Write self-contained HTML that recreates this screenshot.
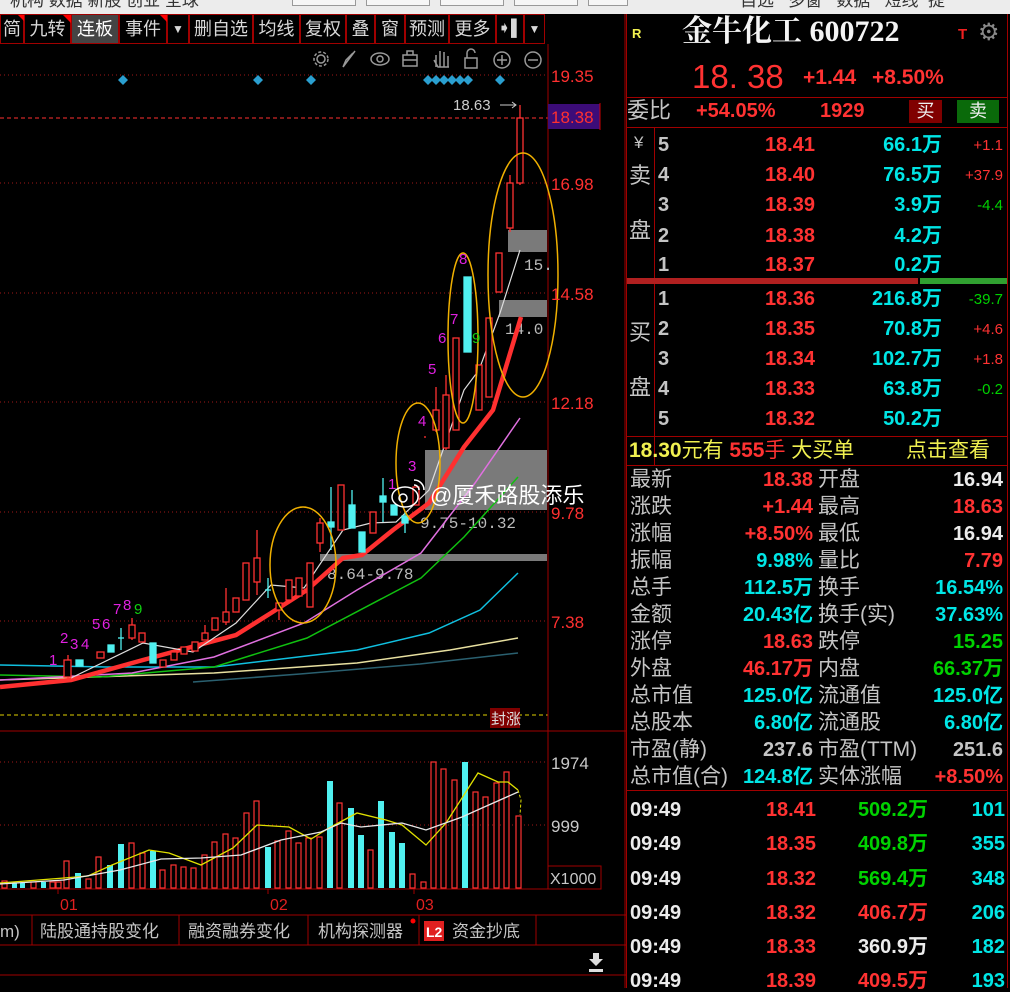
<!DOCTYPE html>
<html><head><meta charset="utf-8">
<style>
*{margin:0;padding:0;box-sizing:border-box}
body{width:1010px;height:988px;background:#000;overflow:hidden;position:relative;font-family:"Liberation Sans","Noto Sans CJK SC",sans-serif}
.t{position:absolute;white-space:nowrap;line-height:1}
.b{font-weight:bold}
.r{color:#ff3232}.c{color:#00e6e6}.g{color:#00d200}.w{color:#ececec}.y{color:#f0f050}.gy{color:#c4c4c4}
.ob{font-size:20px;font-weight:bold}
.sm{font-size:15px}
.st{font-size:21px}
.tb{position:absolute;top:14px;height:30px;border:1px solid #a00000;color:#d8d8d8;font-size:18px;line-height:28px;text-align:center}
</style></head><body>
<div style="position:absolute;left:0;top:0;width:1010px;height:14px;background:#ececec;overflow:hidden">
<div class="t" style="left:10px;top:-8px;font-size:17px;color:#333">机构 数据 新股 创业 全球</div>
<div style="position:absolute;left:292px;top:-8px;width:64px;height:14px;border:1px solid #999;background:#f6f6f6"></div>
<div style="position:absolute;left:366px;top:-8px;width:64px;height:14px;border:1px solid #999;background:#f6f6f6"></div>
<div style="position:absolute;left:440px;top:-8px;width:64px;height:14px;border:1px solid #999;background:#f6f6f6"></div>
<div style="position:absolute;left:514px;top:-8px;width:64px;height:14px;border:1px solid #999;background:#f6f6f6"></div>
<div style="position:absolute;left:588px;top:-8px;width:40px;height:14px;border:1px solid #999;background:#f6f6f6"></div>
<div class="t" style="left:740px;top:-8px;font-size:17px;color:#333">自选 &nbsp; 多窗 &nbsp; 数据 &nbsp; 短线 &nbsp;提</div>
</div>
<div class="tb" style="left:0;width:24px">简</div>
<div class="tb" style="left:24px;width:47px">九转</div>
<div class="tb" style="left:71px;width:48px;background:#444;color:#fff">连板</div>
<div class="tb" style="left:119px;width:48px">事件</div>
<div class="tb" style="left:167px;width:22px;font-size:12px">▼</div>
<div class="tb" style="left:189px;width:64px">删自选</div>
<div class="tb" style="left:253px;width:47px">均线</div>
<div class="tb" style="left:300px;width:46px">复权</div>
<div class="tb" style="left:346px;width:29px">叠</div>
<div class="tb" style="left:375px;width:30px">窗</div>
<div class="tb" style="left:405px;width:44px">预测</div>
<div class="tb" style="left:449px;width:47px">更多</div>
<div class="tb" style="left:496px;width:28px;font-size:16px">➧▌</div>
<div class="tb" style="left:524px;width:21px;font-size:12px">▼</div>
<svg style="position:absolute;left:0;top:0" width="626" height="988">
<polygon points="18,15 24,15 24,21" fill="#f00"/><polygon points="63,15 71,15 71,23" fill="#f00"/><polygon points="160,15 167,15 167,22" fill="#f00"/>
<g stroke="#999" fill="none" stroke-width="1.5">
<circle cx="321" cy="59" r="4"/><circle cx="321" cy="59" r="7" stroke-dasharray="3,2"/>
<path d="M343 67 L355 51 M343 67 L346 60 L353 53"/>
<ellipse cx="380" cy="59" rx="9" ry="6"/><circle cx="380" cy="59" r="3"/>
<rect x="403" y="55" width="14" height="11"/><path d="M407 55 V51 H413 V55 M403 60 H417"/>
<path d="M436 67 V55 M440 67 V51 M444 67 V52 M448 67 V56 M434 60 L438 67 H449"/>
<rect x="465" y="58" width="12" height="10"/><path d="M467 58 V53 A4 4 0 0 1 475 53"/>
<circle cx="502" cy="60" r="8"/><path d="M497 60 H507 M502 55 V65"/>
<circle cx="533" cy="60" r="8"/><path d="M528 60 H538"/>
</g>
<g fill="#2a9fd0">
<path d="M123 75 l5 5 -5 5 -5 -5z"/><path d="M258 75 l5 5 -5 5 -5 -5z"/><path d="M311 75 l5 5 -5 5 -5 -5z"/>
<path d="M428 75 l5 5 -5 5 -5 -5z"/><path d="M436 75 l5 5 -5 5 -5 -5z"/><path d="M444 75 l5 5 -5 5 -5 -5z"/><path d="M452 75 l5 5 -5 5 -5 -5z"/><path d="M460 75 l5 5 -5 5 -5 -5z"/><path d="M468 75 l5 5 -5 5 -5 -5z"/><path d="M500 75 l5 5 -5 5 -5 -5z"/>
</g>
<g stroke="#a01818" stroke-dasharray="1,3" stroke-width="1">
<path d="M0 75H548M0 183H548M0 293H548M0 402H548M0 512H548M0 621H548M0 762H548M0 825H548"/>
</g>
<path d="M0 118H548" stroke="#ff3030" stroke-dasharray="4,3"/>
<path d="M0 715H548" stroke="#e0d000" stroke-dasharray="4,3"/>
<path d="M548 44V889 M0 731H626 M0 889H548 M625 14V988" stroke="#a00000"/>
<g fill="#7a7a7a"><rect x="425" y="450" width="122" height="60"/><rect x="320" y="554" width="227" height="7"/><rect x="508" y="230" width="39" height="22"/><rect x="499" y="300" width="48" height="17"/></g>
<g font-family="Liberation Mono,monospace" font-size="16" fill="#bbb">
<text x="420" y="528">9.75-10.32</text><text x="327" y="579">8.64-9.78</text><text x="524" y="270">15.</text><text x="505" y="334">14.0</text>
</g>
<g fill="none">
<polyline stroke="#2a6070" stroke-width="1.5" points="193,682 300,674 420,664 518,653"/>
<polyline stroke="#e8e0a0" stroke-width="1.5" points="0,680 214,673 357,663 450,650 518,638"/>
<polyline stroke="#10c0e0" stroke-width="1.5" points="0,665 107,667 214,667 357,650 429,633 480,610 518,573"/>
<polyline stroke="#10c010" stroke-width="1.5" points="0,675 100,677 214,667 307,638 421,578 464,537 518,477"/>
<polyline stroke="#e070e0" stroke-width="1.5" points="0,680 132,673 214,657 304,623 357,590 421,553 475,483 520,418"/>
<polyline stroke="#ff3030" stroke-width="4.5" points="0,687 71,680 143,660 236,635 271,613 307,590 343,558 362,555 393,530 429,503 464,447 493,410 521,317"/>
<polyline stroke="#dddddd" stroke-width="1.2" points="71,678 143,643 193,652 236,623 271,585 304,588 343,530 371,523 396,522 429,490 464,390 479,370 500,313 520,250"/>
</g>
<g stroke="#ff3232" fill="#000" stroke-width="1.3">
<line x1="68" y1="655" x2="68" y2="682"/><rect x="64" y="660" width="7" height="17"/>
<rect x="97" y="652" width="7" height="6"/><line x1="132" y1="618" x2="132" y2="640"/><rect x="129" y="625" width="6" height="13"/>
<rect x="139" y="633" width="6" height="9"/><rect x="160" y="660" width="6" height="7"/><rect x="171" y="652" width="6" height="8"/>
<rect x="181" y="647" width="6" height="7"/><rect x="192" y="642" width="6" height="9"/><line x1="205" y1="625" x2="205" y2="640"/><rect x="202" y="633" width="6" height="7"/>
<rect x="212" y="618" width="6" height="12"/><line x1="226" y1="588" x2="226" y2="625"/><rect x="223" y="612" width="6" height="10"/>
<rect x="233" y="598" width="6" height="14"/><rect x="243" y="563" width="6" height="37"/><line x1="257" y1="530" x2="257" y2="595"/><rect x="254" y="558" width="6" height="24"/>
<line x1="279" y1="605" x2="279" y2="620"/><rect x="276" y="603" width="6" height="7"/><rect x="286" y="580" width="6" height="20"/><rect x="296" y="578" width="6" height="18"/>
<rect x="307" y="563" width="6" height="44"/><line x1="320" y1="518" x2="320" y2="552"/><rect x="317" y="523" width="6" height="20"/>
<rect x="338" y="485" width="6" height="45"/><rect x="370" y="512" width="6" height="21"/><rect x="413" y="487" width="6" height="18"/>
<line x1="425" y1="436" x2="425" y2="438"/><line x1="436" y1="387" x2="436" y2="432"/><rect x="433" y="410" width="6" height="20"/>
<line x1="446" y1="375" x2="446" y2="450"/><rect x="443" y="395" width="6" height="53"/><rect x="453" y="338" width="6" height="92"/>
<rect x="476" y="365" width="6" height="45"/><rect x="486" y="318" width="6" height="79"/><rect x="496" y="253" width="6" height="39"/>
<line x1="510" y1="175" x2="510" y2="232"/><rect x="507" y="183" width="6" height="45"/><line x1="520" y1="105" x2="520" y2="185"/><rect x="517" y="118" width="6" height="65"/>
</g>
<g fill="#50f0f0" stroke="#50f0f0" stroke-width="1.3">
<rect x="76" y="660" width="7" height="6"/><rect x="108" y="645" width="6" height="7"/><line x1="121" y1="628" x2="121" y2="650"/><line x1="118" y1="638" x2="124" y2="638"/>
<rect x="150" y="643" width="6" height="20"/><line x1="268" y1="578" x2="268" y2="598"/><line x1="265" y1="590" x2="271" y2="590"/>
<line x1="331" y1="487" x2="331" y2="550"/><rect x="328" y="522" width="6" height="5"/><line x1="352" y1="490" x2="352" y2="528"/><rect x="349" y="505" width="6" height="23"/>
<rect x="359" y="532" width="6" height="20"/><line x1="383" y1="478" x2="383" y2="522"/><rect x="380" y="496" width="6" height="6"/>
<rect x="391" y="505" width="6" height="10"/><line x1="405" y1="512" x2="405" y2="533"/><rect x="402" y="516" width="6" height="7"/>
<rect x="464" y="277" width="7" height="75"/>
</g>
<g fill="none" stroke="#f0b000" stroke-width="1.5">
<ellipse cx="303" cy="565" rx="33" ry="58"/><ellipse cx="418" cy="463" rx="22" ry="60"/><ellipse cx="463" cy="338" rx="15" ry="85"/><ellipse cx="523" cy="275" rx="35" ry="122"/>
</g>
<g font-size="15" fill="#e020e0">
<text x="49" y="665">1</text><text x="60" y="643">2</text><text x="70" y="649">3</text><text x="81" y="649">4</text><text x="92" y="629">5</text><text x="102" y="629">6</text><text x="113" y="614">7</text><text x="123" y="610">8</text><text x="134" y="614" fill="#10d010">9</text>
<text x="388" y="489">1</text><text x="408" y="471">3</text><text x="418" y="426">4</text><text x="428" y="374">5</text><text x="438" y="343">6</text><text x="450" y="324">7</text><text x="459" y="264">8</text><text x="472" y="343" fill="#10d010">9</text>
</g>
<text x="453" y="110" font-size="15" fill="#ccc">18.63</text><path d="M500 105H516 M512 102L516 105 512 108" stroke="#ccc" fill="none"/>
<rect x="490" y="708" width="30" height="20" fill="#800000"/><text x="491" y="724" font-size="15" fill="#ddd">封涨</text>
<g stroke="#fff" fill="none" stroke-width="1.5"><ellipse cx="405" cy="497" rx="13" ry="10"/><circle cx="403" cy="498" r="4"/><path d="M414 480 a10 10 0 0 1 10 10 M414 485 a5 5 0 0 1 5 5"/></g>
<text x="430" y="503" font-size="22" fill="#fff">@厦禾路股添乐</text>
<g font-size="17" fill="#ff3030">
<text x="551" y="82">19.35</text><text x="551" y="190">16.98</text><text x="551" y="300">14.58</text><text x="551" y="409">12.18</text><text x="551" y="519">9.78</text><text x="551" y="628">7.38</text>
</g>
<rect x="548" y="104" width="52" height="25" fill="#3c0c78"/><text x="551" y="123" font-size="17" fill="#ff3030">18.38</text>
<path d="M600 103V130" stroke="#c00"/>
<g fill="#000" stroke="#ff3232" stroke-width="1.2">
<rect x="2" y="881" width="5" height="7"/><rect x="31" y="882" width="5" height="6"/><rect x="50" y="882" width="5" height="6"/><rect x="56" y="882" width="5" height="6"/>
<rect x="64" y="861" width="5" height="27"/><rect x="86" y="879" width="5" height="9"/><rect x="96" y="857" width="5" height="31"/>
<rect x="129" y="843" width="5" height="45"/><rect x="140" y="853" width="5" height="35"/><rect x="160" y="870" width="5" height="18"/><rect x="171" y="865" width="5" height="23"/>
<rect x="181" y="867" width="5" height="21"/><rect x="191" y="868" width="5" height="20"/><rect x="202" y="855" width="5" height="33"/><rect x="212" y="842" width="5" height="46"/>
<rect x="223" y="834" width="5" height="54"/><rect x="233" y="838" width="5" height="50"/><rect x="244" y="813" width="5" height="75"/><rect x="254" y="801" width="5" height="87"/>
<rect x="275" y="841" width="5" height="47"/><rect x="286" y="831" width="5" height="57"/><rect x="296" y="843" width="5" height="45"/><rect x="306" y="838" width="5" height="50"/>
<rect x="317" y="837" width="5" height="51"/><rect x="337" y="803" width="5" height="85"/><rect x="368" y="850" width="5" height="38"/><rect x="410" y="874" width="5" height="14"/>
<rect x="421" y="882" width="5" height="6"/><rect x="431" y="762" width="5" height="126"/><rect x="441" y="769" width="5" height="119"/><rect x="452" y="780" width="5" height="108"/>
<rect x="473" y="792" width="5" height="96"/><rect x="483" y="797" width="5" height="91"/><rect x="494" y="783" width="5" height="105"/><rect x="504" y="772" width="5" height="116"/><rect x="516" y="816" width="5" height="72"/>
</g>
<g fill="#50f0f0">
<rect x="12" y="883" width="5" height="5"/><rect x="20" y="883" width="5" height="5"/><rect x="41" y="882" width="5" height="6"/><rect x="75" y="873" width="6" height="15"/>
<rect x="107" y="865" width="6" height="23"/><rect x="118" y="844" width="6" height="44"/><rect x="150" y="851" width="6" height="37"/><rect x="265" y="847" width="6" height="41"/>
<rect x="327" y="781" width="6" height="107"/><rect x="348" y="808" width="6" height="80"/><rect x="358" y="835" width="6" height="53"/><rect x="378" y="801" width="6" height="87"/>
<rect x="389" y="832" width="6" height="56"/><rect x="399" y="843" width="6" height="45"/><rect x="462" y="762" width="6" height="126"/>
</g>
<polyline fill="none" stroke="#e0e000" stroke-width="1.3" points="0,883 64,878 88,876 112,865 149,850 169,853 201,865 233,848 257,825 289,827 311,839 329,828 357,813 386,820 402,825 426,845 446,823 478,773 498,782 508,782 518,790"/>
<path d="M518 790 L521 800 L520 815" stroke="#e0e000" stroke-dasharray="3,2" fill="none"/>
<polyline fill="none" stroke="#e8e8e8" stroke-width="1.3" points="0,884 64,880 120,870 161,859 201,858 241,855 281,840 321,832 341,823 361,827 402,823 426,830 462,817 482,808 518,792"/>
<g font-size="17" fill="#c8c8c8"><text x="551" y="769">1974</text><text x="551" y="832">999</text></g>
<rect x="548" y="866" width="53" height="23" fill="none" stroke="#a00000"/><text x="550" y="884" font-size="16" fill="#c8c8c8">X1000</text>
<path d="M58 889v5 M268 889v5 M414 889v5" stroke="#a00000"/>
<g font-size="16" fill="#e02020"><text x="60" y="910">01</text><text x="270" y="910">02</text><text x="416" y="910">03</text></g>
<path d="M0 915H626 M0 945H626 M0 975H626 M32 915V945 M179 915V945 M308 915V945 M419 915V945 M536 915V945" stroke="#a00000"/>
<g font-size="17" fill="#c4c4c4"><text x="0" y="937">m)</text><text x="40" y="937">陆股通持股变化</text><text x="188" y="937">融资融券变化</text><text x="318" y="937">机构探测器</text><text x="452" y="937">资金抄底</text></g>
<circle cx="413" cy="921" r="2.5" fill="#f00"/>
<rect x="424" y="921" width="20" height="20" fill="#e02020"/><text x="426" y="937" font-size="14" fill="#fff" font-weight="bold">L2</text>
<path d="M593 953h6v6h4l-7 7-7-7h4z M589 969h14v3h-14z" fill="#ddd"/>
</svg>

<div style="position:absolute;left:626px;top:14px;width:1px;height:974px;background:#a00000"></div>
<div style="position:absolute;left:1007px;top:14px;width:1px;height:974px;background:#a00000"></div>
<div class="t b" style="left:632px;top:27px;font-size:13px;color:#f0f050">R</div>
<div class="t" style="left:682px;top:17px;font-size:30px;color:#f4f4f4;font-family:'Liberation Serif','Noto Serif CJK SC',serif;font-weight:bold">金牛化工 600722</div>
<div class="t b" style="left:958px;top:27px;font-size:15px;color:#f02020">T</div>
<div class="t" style="left:978px;top:21px;font-size:24px;color:#888">⚙</div>
<div class="t" style="left:692px;top:60px;font-size:33px;color:#ff3232;font-family:'Liberation Sans',sans-serif">18. 38</div>
<div class="t b" style="left:803px;top:67px;font-size:21px;color:#ff3232">+1.44</div>
<div class="t b" style="left:872px;top:67px;font-size:21px;color:#ff3232">+8.50%</div>
<div style="position:absolute;left:626px;top:97px;width:382px;height:1px;background:#a00000"></div>
<div class="t gy" style="left:627px;top:100px;font-size:22px">委比</div>
<div class="t b r" style="left:696px;top:101px;font-size:20px">+54.05%</div>
<div class="t b r" style="left:820px;top:101px;font-size:20px">1929</div>
<div style="position:absolute;left:909px;top:100px;width:33px;height:23px;background:#800000;color:#eee;font-size:18px;text-align:center;line-height:23px">买</div>
<div style="position:absolute;left:957px;top:100px;width:42px;height:23px;background:#0a6a0a;color:#eee;font-size:18px;text-align:center;line-height:23px">卖</div>
<div style="position:absolute;left:626px;top:127px;width:382px;height:1px;background:#a00000"></div>
<div style="position:absolute;left:654px;top:127px;width:1px;height:338px;background:#a00000"></div>
<div class="t gy" style="left:634px;top:134px;font-size:17px">¥</div>
<div class="t gy" style="left:629px;top:165px;font-size:22px">卖</div>
<div class="t gy" style="left:629px;top:220px;font-size:22px">盘</div>
<div class="t gy" style="left:629px;top:322px;font-size:22px">买</div>
<div class="t gy" style="left:629px;top:377px;font-size:22px">盘</div>

<div class="t ob gy" style="left:658px;top:135px">5</div><div class="t ob r" style="right:195px;top:135px">18.41</div><div class="t ob c" style="right:68px;top:135px">66.1万</div><div class="t sm r" style="right:7px;top:138px">+1.1</div>
<div class="t ob gy" style="left:658px;top:165px">4</div><div class="t ob r" style="right:195px;top:165px">18.40</div><div class="t ob c" style="right:68px;top:165px">76.5万</div><div class="t sm r" style="right:7px;top:168px">+37.9</div>
<div class="t ob gy" style="left:658px;top:195px">3</div><div class="t ob r" style="right:195px;top:195px">18.39</div><div class="t ob c" style="right:68px;top:195px">3.9万</div><div class="t sm g" style="right:7px;top:198px">-4.4</div>
<div class="t ob gy" style="left:658px;top:226px">2</div><div class="t ob r" style="right:195px;top:226px">18.38</div><div class="t ob c" style="right:68px;top:226px">4.2万</div>
<div class="t ob gy" style="left:658px;top:255px">1</div><div class="t ob r" style="right:195px;top:255px">18.37</div><div class="t ob c" style="right:68px;top:255px">0.2万</div>
<div style="position:absolute;left:627px;top:278px;width:291px;height:6px;background:#b02020"></div>
<div style="position:absolute;left:920px;top:278px;width:87px;height:6px;background:#30a030"></div>
<div class="t ob gy" style="left:658px;top:289px">1</div><div class="t ob r" style="right:195px;top:289px">18.36</div><div class="t ob c" style="right:68px;top:289px">216.8万</div><div class="t sm g" style="right:7px;top:292px">-39.7</div>
<div class="t ob gy" style="left:658px;top:319px">2</div><div class="t ob r" style="right:195px;top:319px">18.35</div><div class="t ob c" style="right:68px;top:319px">70.8万</div><div class="t sm r" style="right:7px;top:322px">+4.6</div>
<div class="t ob gy" style="left:658px;top:349px">3</div><div class="t ob r" style="right:195px;top:349px">18.34</div><div class="t ob c" style="right:68px;top:349px">102.7万</div><div class="t sm r" style="right:7px;top:352px">+1.8</div>
<div class="t ob gy" style="left:658px;top:379px">4</div><div class="t ob r" style="right:195px;top:379px">18.33</div><div class="t ob c" style="right:68px;top:379px">63.8万</div><div class="t sm g" style="right:7px;top:382px">-0.2</div>
<div class="t ob gy" style="left:658px;top:409px">5</div><div class="t ob r" style="right:195px;top:409px">18.32</div><div class="t ob c" style="right:68px;top:409px">50.2万</div>
<div style="position:absolute;left:626px;top:436px;width:382px;height:1px;background:#a00000"></div>
<div class="t" style="left:629px;top:440px;font-size:21px"><b class="y">18.30</b><span class="y">元有</span> <b class="r">555</b><span class="r">手</span> <span class="y">大买单</span></div>
<div class="t y" style="left:906px;top:440px;font-size:21px">点击查看</div>
<div style="position:absolute;left:626px;top:465px;width:382px;height:1px;background:#a00000"></div>

<div class="t st gy" style="left:630px;top:469px">最新</div><div class="t ob r" style="right:197px;top:470px">18.38</div><div class="t st gy" style="left:818px;top:469px">开盘</div><div class="t ob w" style="right:7px;top:470px">16.94</div>
<div class="t st gy" style="left:630px;top:496px">涨跌</div><div class="t ob r" style="right:197px;top:497px">+1.44</div><div class="t st gy" style="left:818px;top:496px">最高</div><div class="t ob r" style="right:7px;top:497px">18.63</div>
<div class="t st gy" style="left:630px;top:523px">涨幅</div><div class="t ob r" style="right:197px;top:524px">+8.50%</div><div class="t st gy" style="left:818px;top:523px">最低</div><div class="t ob w" style="right:7px;top:524px">16.94</div>
<div class="t st gy" style="left:630px;top:550px">振幅</div><div class="t ob c" style="right:197px;top:551px">9.98%</div><div class="t st gy" style="left:818px;top:550px">量比</div><div class="t ob r" style="right:7px;top:551px">7.79</div>
<div class="t st gy" style="left:630px;top:577px">总手</div><div class="t ob c" style="right:197px;top:578px">112.5万</div><div class="t st gy" style="left:818px;top:577px">换手</div><div class="t ob c" style="right:7px;top:578px">16.54%</div>
<div class="t st gy" style="left:630px;top:604px">金额</div><div class="t ob c" style="right:197px;top:605px">20.43亿</div><div class="t st gy" style="left:818px;top:604px">换手(实)</div><div class="t ob c" style="right:7px;top:605px">37.63%</div>
<div class="t st gy" style="left:630px;top:631px">涨停</div><div class="t ob r" style="right:197px;top:632px">18.63</div><div class="t st gy" style="left:818px;top:631px">跌停</div><div class="t ob g" style="right:7px;top:632px">15.25</div>
<div class="t st gy" style="left:630px;top:658px">外盘</div><div class="t ob r" style="right:197px;top:659px">46.17万</div><div class="t st gy" style="left:818px;top:658px">内盘</div><div class="t ob g" style="right:7px;top:659px">66.37万</div>
<div class="t st gy" style="left:630px;top:685px">总市值</div><div class="t ob c" style="right:197px;top:686px">125.0亿</div><div class="t st gy" style="left:818px;top:685px">流通值</div><div class="t ob c" style="right:7px;top:686px">125.0亿</div>
<div class="t st gy" style="left:630px;top:712px">总股本</div><div class="t ob c" style="right:197px;top:713px">6.80亿</div><div class="t st gy" style="left:818px;top:712px">流通股</div><div class="t ob c" style="right:7px;top:713px">6.80亿</div>
<div class="t st gy" style="left:630px;top:739px">市盈(静)</div><div class="t ob gy" style="right:197px;top:740px">237.6</div><div class="t st gy" style="left:818px;top:739px">市盈(TTM)</div><div class="t ob gy" style="right:7px;top:740px">251.6</div>
<div class="t st gy" style="left:630px;top:766px">总市值(合)</div><div class="t ob c" style="right:197px;top:767px">124.8亿</div><div class="t st gy" style="left:818px;top:766px">实体涨幅</div><div class="t ob r" style="right:7px;top:767px">+8.50%</div>
<div style="position:absolute;left:626px;top:790px;width:382px;height:1px;background:#a00000"></div>

<div class="t ob w" style="left:630px;top:800px">09:49</div><div class="t ob r" style="right:194px;top:800px">18.41</div><div class="t ob g" style="right:82px;top:800px">509.2万</div><div class="t ob c" style="right:5px;top:800px">101</div>
<div class="t ob w" style="left:630px;top:834px">09:49</div><div class="t ob r" style="right:194px;top:834px">18.35</div><div class="t ob g" style="right:82px;top:834px">409.8万</div><div class="t ob c" style="right:5px;top:834px">355</div>
<div class="t ob w" style="left:630px;top:869px">09:49</div><div class="t ob r" style="right:194px;top:869px">18.32</div><div class="t ob g" style="right:82px;top:869px">569.4万</div><div class="t ob c" style="right:5px;top:869px">348</div>
<div class="t ob w" style="left:630px;top:903px">09:49</div><div class="t ob r" style="right:194px;top:903px">18.32</div><div class="t ob r" style="right:82px;top:903px">406.7万</div><div class="t ob c" style="right:5px;top:903px">206</div>
<div class="t ob w" style="left:630px;top:937px">09:49</div><div class="t ob r" style="right:194px;top:937px">18.33</div><div class="t ob w" style="right:82px;top:937px">360.9万</div><div class="t ob c" style="right:5px;top:937px">182</div>
<div class="t ob w" style="left:630px;top:971px">09:49</div><div class="t ob r" style="right:194px;top:971px">18.39</div><div class="t ob r" style="right:82px;top:971px">409.5万</div><div class="t ob c" style="right:5px;top:971px">193</div>
</body></html>
